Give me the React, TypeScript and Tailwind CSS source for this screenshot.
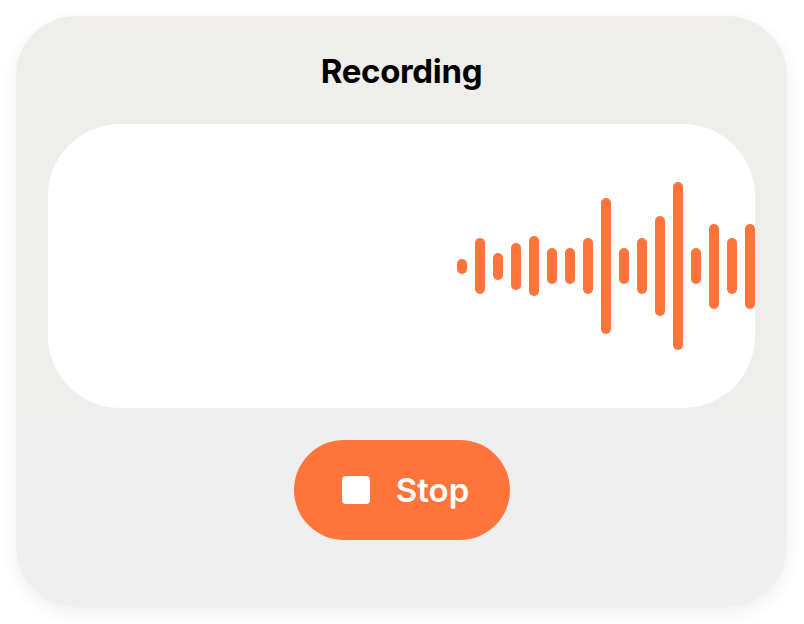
import React from "react";

const bars = [15, 56, 27, 47, 60, 36, 36, 56, 136, 36, 56, 100, 168, 36, 85, 56, 85];

export default function App() {
  return (
    <div className="flex h-[624px] w-[804px] items-start justify-start bg-white p-4 font-['Inter',sans-serif]">
      <div className="flex h-[591px] w-[771px] flex-col items-center rounded-[60px] bg-gradient-to-b from-[#efeeeb] to-[#efefef] px-8 pt-[35px] shadow-[0_6px_18px_rgba(0,0,0,0.07)]">
        <h1 className="text-[33px] font-bold leading-10 tracking-[-0.01em] text-black">
          Recording
        </h1>

        {/* waveform panel */}
        <div className="mt-[33px] flex h-[284px] w-full items-center justify-end gap-2 overflow-hidden rounded-[72px] bg-white">
          {bars.map((h, i) => (
            <div
              key={i}
              className="w-[10px] shrink-0 rounded-full bg-[#ff743a]"
              style={{ height: h }}
            />
          ))}
        </div>

        <button className="mt-8 flex h-[100px] w-[216px] items-center justify-center gap-[26px] rounded-full bg-[#ff743a] pl-2 text-white">
          <span className="h-7 w-7 rounded-[4px] bg-white" />
          <span className="text-[33px] font-semibold leading-10">Stop</span>
        </button>
      </div>
    </div>
  );
}
